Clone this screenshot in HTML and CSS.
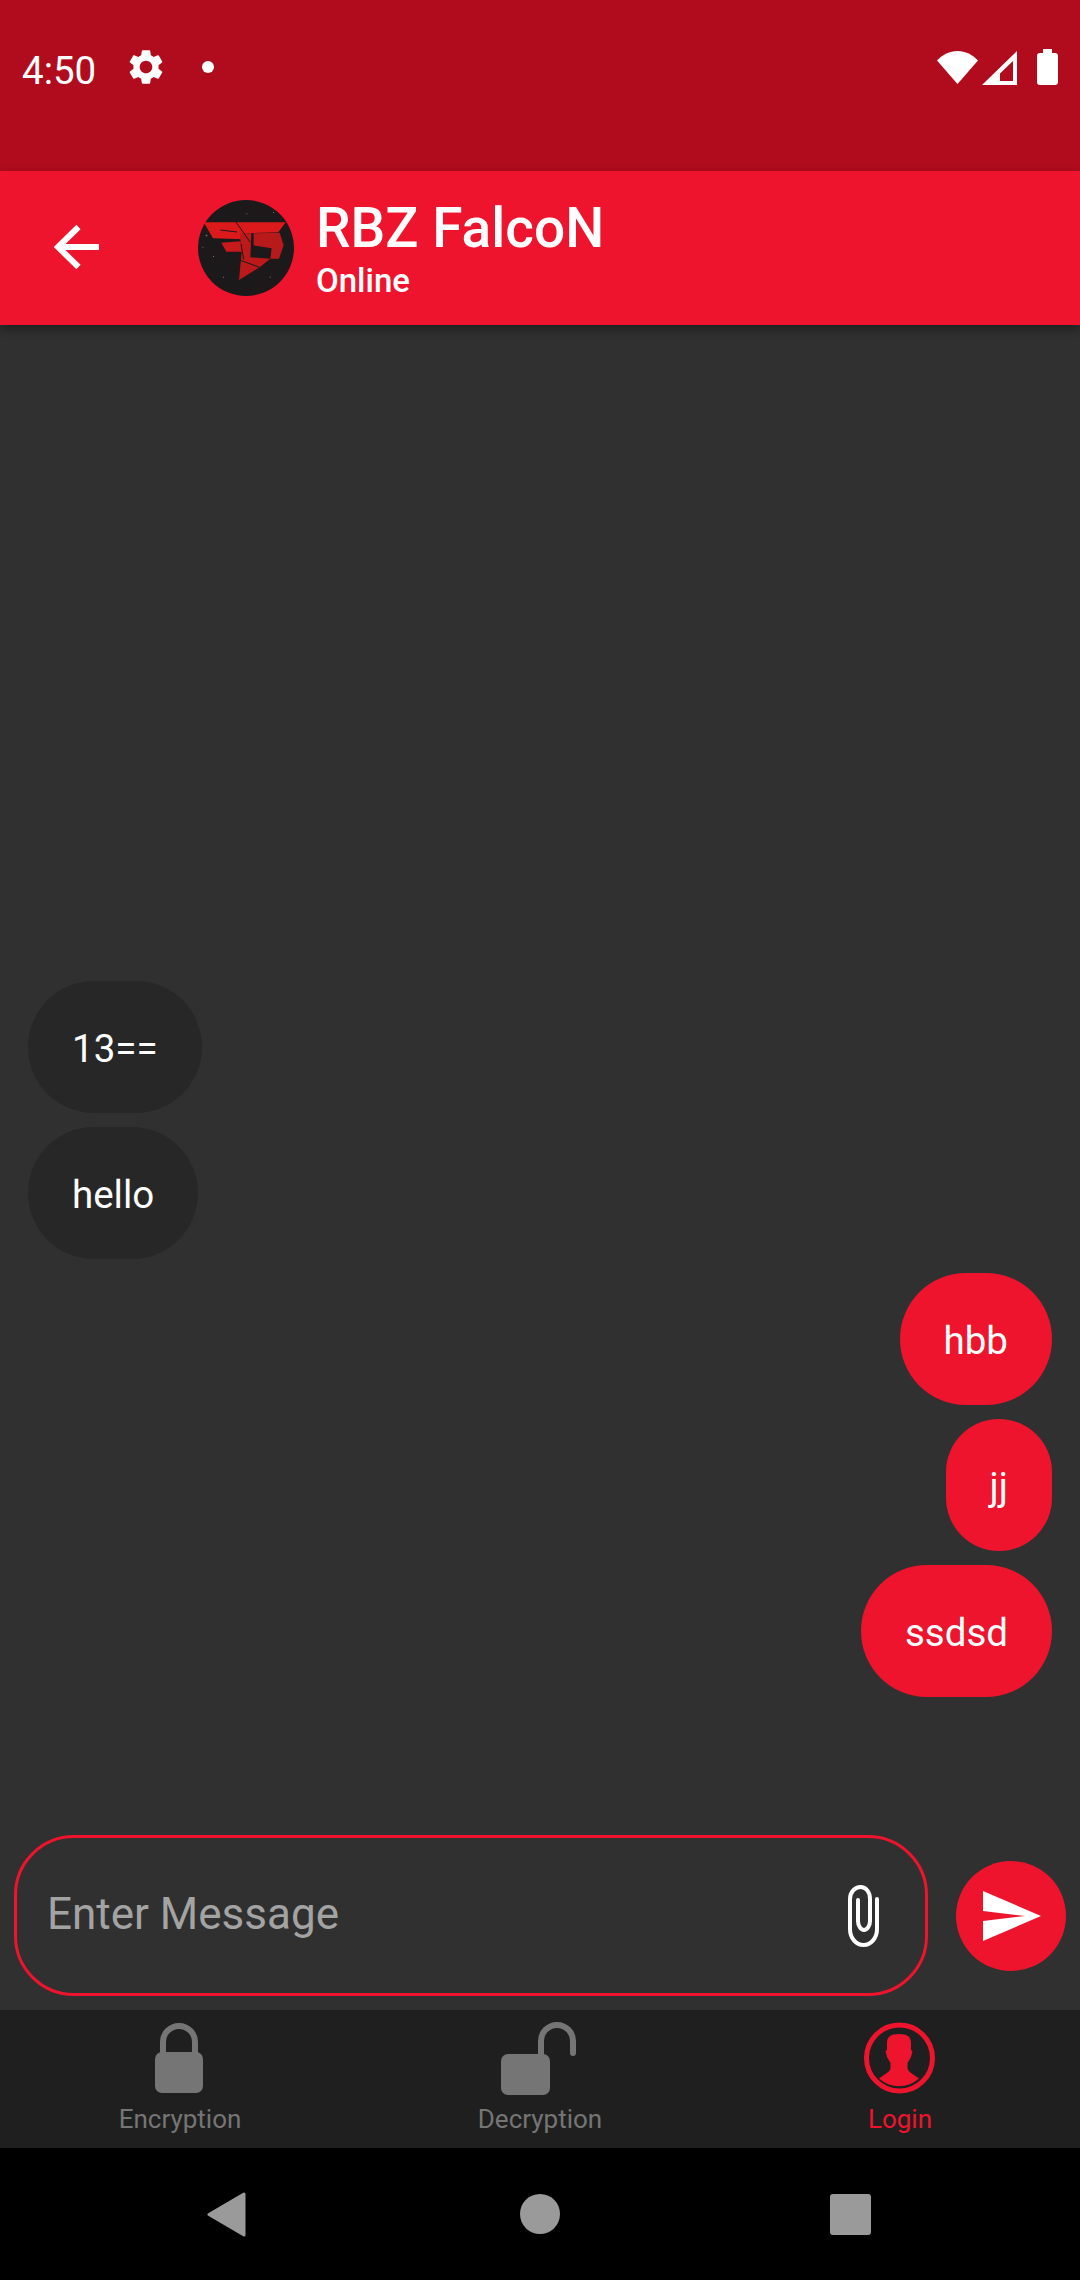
FILE: index.html
```
<!DOCTYPE html>
<html lang="en">
<head>
<meta charset="utf-8">
<title>RBZ FalcoN</title>
<link rel="stylesheet" href="styles.css">
</head>
<body>
<div class="screen">
  <div class="statusbar">
    <span class="time">4:50</span>
    <svg class="gear" viewBox="0 0 24 24"><path fill="#fff" d="M19.14 12.94c.04-.3.06-.61.06-.94 0-.32-.02-.64-.07-.94l2.03-1.58a.49.49 0 0 0 .12-.61l-1.92-3.32a.488.488 0 0 0-.59-.22l-2.39.96c-.5-.38-1.03-.7-1.62-.94l-.36-2.54a.484.484 0 0 0-.48-.41h-3.84c-.24 0-.43.17-.47.41l-.36 2.54c-.59.24-1.13.57-1.62.94l-2.39-.96c-.22-.08-.47 0-.59.22L2.74 8.87c-.12.21-.08.47.12.61l2.03 1.58c-.05.3-.09.63-.09.94s.02.64.07.94l-2.03 1.58a.49.49 0 0 0-.12.61l1.92 3.32c.12.22.37.29.59.22l2.39-.96c.5.38 1.03.7 1.62.94l.36 2.54c.05.24.24.41.48.41h3.84c.24 0 .44-.17.47-.41l.36-2.54c.59-.24 1.13-.56 1.62-.94l2.39.96c.22.08.47 0 .59-.22l1.92-3.32c.12-.22.07-.47-.12-.61l-2.01-1.58zM12 15.6c-1.98 0-3.6-1.62-3.6-3.6s1.62-3.6 3.6-3.6 3.6 1.62 3.6 3.6-1.62 3.6-3.6 3.6z"/></svg>
    <span class="dot"></span>
    <span class="spacer"></span>
    <svg class="wifi" viewBox="0 0 41 33"><path fill="#fff" d="M20.5 33 0 9.5C5.5 3.6 12.6 0 20.5 0S35.5 3.6 41 9.5z"/></svg>
    <svg class="signal" viewBox="0 0 35 34"><path fill="#fff" fill-rule="evenodd" d="M0 34 35 0v34zM18 22.5V30h13V10z"/></svg>
    <svg class="battery" viewBox="0 0 21 36"><path fill="#fff" d="M6 0h9v4h3a3 3 0 0 1 3 3v26a3 3 0 0 1-3 3H3a3 3 0 0 1-3-3V7a3 3 0 0 1 3-3h3z"/></svg>
  </div>

  <header class="appbar">
    <svg class="back" viewBox="0 0 46 46"><path fill="none" stroke="#fff" stroke-width="6" d="M45 23H5M24.500 3 4 23l20.500 20"/></svg>
    <svg class="avatar" viewBox="55 60 288 288">
      <circle cx="199" cy="204" r="144" fill="#1b191a"/>
      <path fill="#dc1a1c" d="M72 127h246l-22 30-96 3-5 18-95-3z"/>
      <path fill="#c8191b" d="M125 188l57-4 6 31-48 0z"/>
      <path fill="#bd191b" d="M180 160h35l-3 72 60 4-32 26-62 38 8-85z"/>
      <path fill="#b81a1c" d="M222 160l78-2 12 38-14 40h-26l4-31-54-9z"/>
      <path fill="none" stroke="#1b191a" stroke-width="3" d="M168 125l44 62M184 192l8 46M180 240l60 22M122 150l50 6"/>
      <path fill="#8b6a66" d="M78 164h5v5h-5zM100 228h3v3h-3zM130 290h3v3h-3zM270 290h3v3h-3zM68 200h3v3h-3zM280 96h3v3h-3zM200 100h3v3h-3z"/>
    </svg>
    <div class="who">
      <div class="name">RBZ FalcoN</div>
      <div class="presence">Online</div>
    </div>
  </header>

  <main class="chat">
    <div class="bubble in">13==</div>
    <div class="bubble in">hello</div>
    <div class="bubble out">hbb</div>
    <div class="bubble out">jj</div>
    <div class="bubble out">ssdsd</div>
  </main>

  <div class="composer">
    <div class="field">
      <span class="placeholder">Enter Message</span>
      <svg class="clip" viewBox="0 0 31 62"><path fill="none" stroke="#fff" stroke-width="4" stroke-linecap="round" d="M29 14v30c0 9-6 16-13.500 16S2 53 2 44V14C2 7 7 2 12.500 2S22 7 22 14v22c0 5-3 9-6 9s-6-4-6-9V15"/></svg>
    </div>
    <button class="send" type="button" aria-label="Send">
      <svg viewBox="0 0 58 50"><path fill="#fff" d="M0 50 58 25 0 0v20l42 5-42 5z"/></svg>
    </button>
  </div>

  <nav class="tabs">
    <div class="tab">
      <svg class="tab-icon" viewBox="0 0 72 74"><path fill="none" stroke="#757575" stroke-width="6" d="M19 33V21a16 16 0 0 1 32 0v12"/><rect x="11" y="31" width="48" height="41" rx="7" fill="#757575"/></svg>
      <span class="tab-label">Encryption</span>
    </div>
    <div class="tab">
      <svg class="tab-icon" viewBox="0 0 80 74"><path fill="none" stroke="#757575" stroke-width="6" stroke-linecap="round" d="M41 34V20a16 16 0 0 1 32 0v12"/><rect x="1" y="33" width="49" height="41" rx="7" fill="#757575"/></svg>
      <span class="tab-label">Decryption</span>
    </div>
    <div class="tab active">
      <svg class="tab-icon" viewBox="0 0 72 74"><circle cx="35.500" cy="37" r="33" fill="none" stroke="#ee142d" stroke-width="5"/><path fill="#ee142d" d="M35 13c-8.500 0-12 3-12 9v7l-1.500 1 1.500 6 3.500 6v5c-.500 4-5.500 6-11.500 10.500A30 30 0 0 0 55 57.500C49 53 44 51 43.500 47v-5l3.500-6 1.500-6-1.500-1v-7c0-6-3.500-9-12-9z"/></svg>
      <span class="tab-label">Login</span>
    </div>
  </nav>

  <div class="sysnav">
    <svg class="sys-back" viewBox="0 0 39 45"><path fill="#9a9a9a" stroke="#9a9a9a" stroke-width="3" stroke-linejoin="round" d="M37 2v41L2 22.500z"/></svg>
    <span class="sys-home"></span>
    <span class="sys-recent"></span>
  </div>
</div>
</body>
</html>
```

FILE: styles.css
```
* { box-sizing: border-box; }
html, body { margin: 0; padding: 0; }
body { background: #303030; font-family: Roboto, "Noto Sans", sans-serif; color: #fff; }

.screen { width: 1080px; height: 2280px; display: flex; flex-direction: column; overflow: hidden; }

.statusbar { height: 171px; flex: none; background: #b00c1e; display: flex; align-items: flex-start; padding: 49px 22px 0 22px; }
.time { font-size: 38.5px; line-height: 44px; }
.gear { width: 42px; height: 42px; margin: -3px 0 0 29px; display: block; }
.dot { width: 12px; height: 12px; border-radius: 50%; background: #fff; margin: 12px 0 0 35px; }
.spacer { flex: 1; }
.wifi { width: 41px; height: 33px; margin-top: 2px; display: block; }
.signal { width: 35px; height: 34px; margin: 2px 0 0 4px; display: block; }
.battery { width: 21px; height: 36px; margin: 0 0 0 20px; display: block; }

.appbar { height: 154px; flex: none; background: #ee142d; display: flex; align-items: center; padding-left: 54px; position: relative; box-shadow: 0 4px 10px rgba(0,0,0,.35); }
.back { width: 46px; height: 46px; flex: none; display: block; margin-top: -2px; }
.avatar { width: 96px; height: 96px; flex: none; margin-left: 98px; display: block; }
.who { margin-left: 22px; display: flex; flex-direction: column; margin-top: 1px; }
.name { font-size: 55px; line-height: 62px; font-weight: 500; }
.presence { font-size: 33px; line-height: 38px; font-weight: 500; margin-top: 3px; }

.chat { flex: 1; display: flex; flex-direction: column; justify-content: flex-end; gap: 14px; padding: 0 28px 138px; background: #303030; }
.bubble { height: 132px; border-radius: 66px; display: flex; align-items: center; padding: 2px 44px 0; font-size: 38.5px; }
.in { align-self: flex-start; background: #272727; }
.out { align-self: flex-end; background: #ee142d; }

.composer { flex: none; display: flex; align-items: center; gap: 28px; padding: 0 14px 14px 14px; }
.field { width: 915px; height: 161px; border: 3px solid #ee142d; border-radius: 60px; display: flex; align-items: center; justify-content: space-between; padding: 0 46px 0 30px; }
.placeholder { font-size: 44px; color: #a3a3a3; margin-top: -3px; }
.clip { width: 31px; height: 62px; display: block; }
.send { width: 110px; height: 110px; border: 0; padding: 0; border-radius: 50%; background: #ee142d; display: flex; align-items: center; justify-content: center; }
.send svg { width: 58px; height: 50px; display: block; margin-left: 1px; }

.tabs { height: 138px; flex: none; background: #1f1f1f; display: grid; grid-template-columns: repeat(3, 360px); }
.tab { display: flex; flex-direction: column; align-items: center; padding-top: 11px; color: #757575; }
.tab-icon { height: 74px; display: block; }
.tab.active { color: #ee142d; }
.tab-label { font-size: 26px; line-height: 30px; margin-top: 9px; }

.sysnav { height: 132px; flex: none; background: #000; position: relative; display: flex; }
.sys-back { width: 39px; height: 45px; display: block; margin: 44px 0 0 207px; }
.sys-home { width: 40px; height: 40px; border-radius: 50%; background: #9a9a9a; margin: 46px 0 0 274px; }
.sys-recent { width: 41px; height: 41px; border-radius: 3px; background: #9a9a9a; margin: 46px 0 0 270px; }
```
